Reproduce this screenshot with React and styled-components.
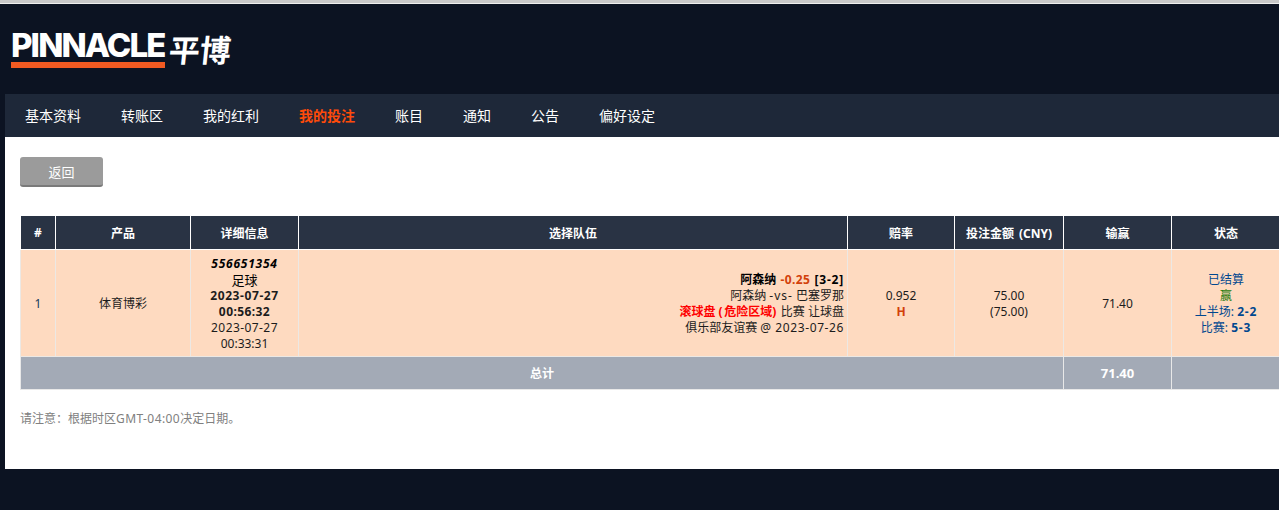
import React from "react";
import styled, { createGlobalStyle } from "styled-components";

const Global = createGlobalStyle`
  html, body {
    margin: 0;
    padding: 0;
    height: 100%;
    overflow: hidden;
    background: #0c1322;
  }
  body {
    font-family: "Noto Sans", "Noto Sans CJK SC", Tahoma, sans-serif;
    font-size: 12px;
    color: #222;
  }
`;

const TopLine = styled.div`
  height: 4px;
  background: #c9c9c9;
  border-bottom: 1px solid #efefef;
  box-sizing: border-box;
`;

const Header = styled.header`
  height: 90px;
  padding-left: 11px;
  display: flex;
  align-items: center;
  gap: 4px;
  box-sizing: border-box;
`;

const LogoWord = styled.div`
  width: 154px;
  color: #fff;
  font-family: "Inter", "Liberation Sans", sans-serif;
  font-weight: 800;
  font-size: 33px;
  line-height: 26px;
  letter-spacing: -1.9px;
  white-space: nowrap;
  border-bottom: 6px solid #f15a22;
  padding-bottom: 4px;
  margin-top: 2px;
`;

const LogoCn = styled.div`
  color: #fff;
  font-family: "Noto Sans CJK SC", sans-serif;
  font-weight: 700;
  font-size: 31px;
  line-height: 36px;
  white-space: nowrap;
  transform: skewX(-6deg);
`;

const Nav = styled.nav`
  margin-left: 5px;
  height: 43px;
  background: #1e2839;
  display: flex;
  padding-left: 20px;
  gap: 40px;
  align-items: center;
`;

const NavItem = styled.a`
  color: ${(p) => (p.$active ? "#ff4b0a" : "#fff")};
  font-weight: ${(p) => (p.$active ? 700 : 400)};
  font-size: 14px;
  line-height: 18px;
  white-space: nowrap;
`;

const Content = styled.main`
  margin-left: 5px;
  height: 332px;
  background: #fff;
  padding: 20px 0 0 15px;
  box-sizing: border-box;
  overflow: hidden;
`;

const BackButton = styled.button`
  display: block;
  width: 83px;
  height: 30px;
  padding: 0;
  background: #9b9b9b;
  color: #fff;
  border: 0;
  border-bottom: 2px solid #7a7a7a;
  border-radius: 3px;
  font-family: inherit;
  font-size: 13px;
`;

const Table = styled.table`
  margin-top: 28px;
  border-collapse: collapse;
  table-layout: fixed;
  width: 1260px;
`;

const Th = styled.th`
  height: 33px;
  padding: 0;
  background: #293344;
  color: #fff;
  font-size: 12px;
  font-weight: 700;
  word-spacing: 2px;
  text-align: center;
  border: 1px solid #fff;
`;

const Td = styled.td`
  height: 104px;
  padding: 2px 3px 0;
  background: #fedac0;
  color: ${(p) => p.$color || "#1c1c1c"};
  line-height: 16px;
  font-size: 12px;
  text-align: ${(p) => p.$align || "center"};
  border: 1px solid #ece8e4;
`;

const TotalCell = styled.td`
  height: 32px;
  padding: 0;
  background: #a3aab6;
  color: #fff;
  font-weight: 700;
  font-size: ${(p) => (p.$large ? "13px" : "12px")};
  text-align: center;
  border: 1px solid #e8e8e8;
`;

const Line = styled.div`
  font-weight: ${(p) => (p.$bold ? 700 : 400)};
  font-style: ${(p) => (p.$italic ? "italic" : "normal")};
  font-size: ${(p) => (p.$large ? "13px" : "inherit")};
  word-spacing: ${(p) => p.$gap || "0"};
  color: ${(p) => p.$color || "inherit"};
  white-space: nowrap;
`;

const Tint = styled.span`
  color: ${(p) => p.$color || "inherit"};
  font-weight: ${(p) => (p.$bold ? 700 : "inherit")};
`;

// latin runs sit a little wider than the cjk around them
const Wide = styled.span`
  letter-spacing: ${(p) => p.$space || "0.42px"};
`;

const Note = styled.p`
  margin: 21px 0 0;
  color: #808080;
  font-size: 12px;
  line-height: 16px;
`;

const navItems = ["基本资料", "转账区", "我的红利", "我的投注", "账目", "通知", "公告", "偏好设定"];
const columns = [
  ["#", 35],
  ["产品", 135],
  ["详细信息", 108],
  ["选择队伍", 549],
  ["赔率", 107],
  ["投注金额 (CNY)", 109],
  ["输赢", 108],
  ["状态", 109],
];

export default function App() {
  return (
    <>
      <Global />
      <TopLine />
      <Header>
        <LogoWord>PINNACLE</LogoWord>
        <LogoCn>平博</LogoCn>
      </Header>
      <Nav>
        {navItems.map((item) => (
          <NavItem key={item} $active={item === "我的投注"}>
            {item}
          </NavItem>
        ))}
      </Nav>
      <Content>
        <BackButton>返回</BackButton>
        <Table>
          <colgroup>
            {columns.map(([name, width]) => (
              <col key={name} style={{ width }} />
            ))}
          </colgroup>
          <thead>
            <tr>
              {columns.map(([name]) => (
                <Th key={name}>{name}</Th>
              ))}
            </tr>
          </thead>
          <tbody>
            <tr>
              <Td $color="#123a5c">1</Td>
              <Td>体育博彩</Td>
              <Td>
                <Line $bold $italic $color="#000"><Wide $space="0.75px">556651354</Wide></Line>
                <Line $large $color="#000">足球</Line>
                <Line $bold><Wide $space="0.6px">2023-07-27</Wide></Line>
                <Line $bold><Wide>00:56:32</Wide></Line>
                <Line><Wide>2023-07-27</Wide></Line>
                <Line>00:33:31</Line>
              </Td>
              <Td $align="right">
                <Line $bold $color="#000" $gap="1px">
                  阿森纳 <Tint $color="#d2400a"><Wide>-0.25</Wide></Tint> <Wide $space="0.8px">[3-2]</Wide>
                </Line>
                <Line>阿森纳 <Wide $space="1px">-vs-</Wide> 巴塞罗那</Line>
                <Line>
                  <Tint $color="#ff0000" $bold>滚球盘 <Wide $space="1.5px">(</Wide>危险区域<Wide $space="1.5px">)</Wide></Tint> 比赛 让球盘
                </Line>
                <Line>俱乐部友谊赛 <Wide $space="0.6px">@ 2023-07-26</Wide></Line>
              </Td>
              <Td>
                <Line>0.952</Line>
                <Line $bold $color="#d2400a">H</Line>
              </Td>
              <Td>
                <Line>75.00</Line>
                <Line>(75.00)</Line>
              </Td>
              <Td>71.40</Td>
              <Td $color="#00478f">
                <Line>已结算</Line>
                <Line $color="#1f7a0a">赢</Line>
                <Line>上半场: <Tint $bold><Wide $space="0.8px">2-2</Wide></Tint></Line>
                <Line>比赛: <Tint $bold><Wide $space="0.8px">5-3</Wide></Tint></Line>
              </Td>
            </tr>
            <tr>
              <TotalCell colSpan={6}>总计</TotalCell>
              <TotalCell $large>71.40</TotalCell>
              <TotalCell />
            </tr>
          </tbody>
        </Table>
        <Note>请注意：根据时区<Wide>GMT-04:00</Wide>决定日期。</Note>
      </Content>
    </>
  );
}
